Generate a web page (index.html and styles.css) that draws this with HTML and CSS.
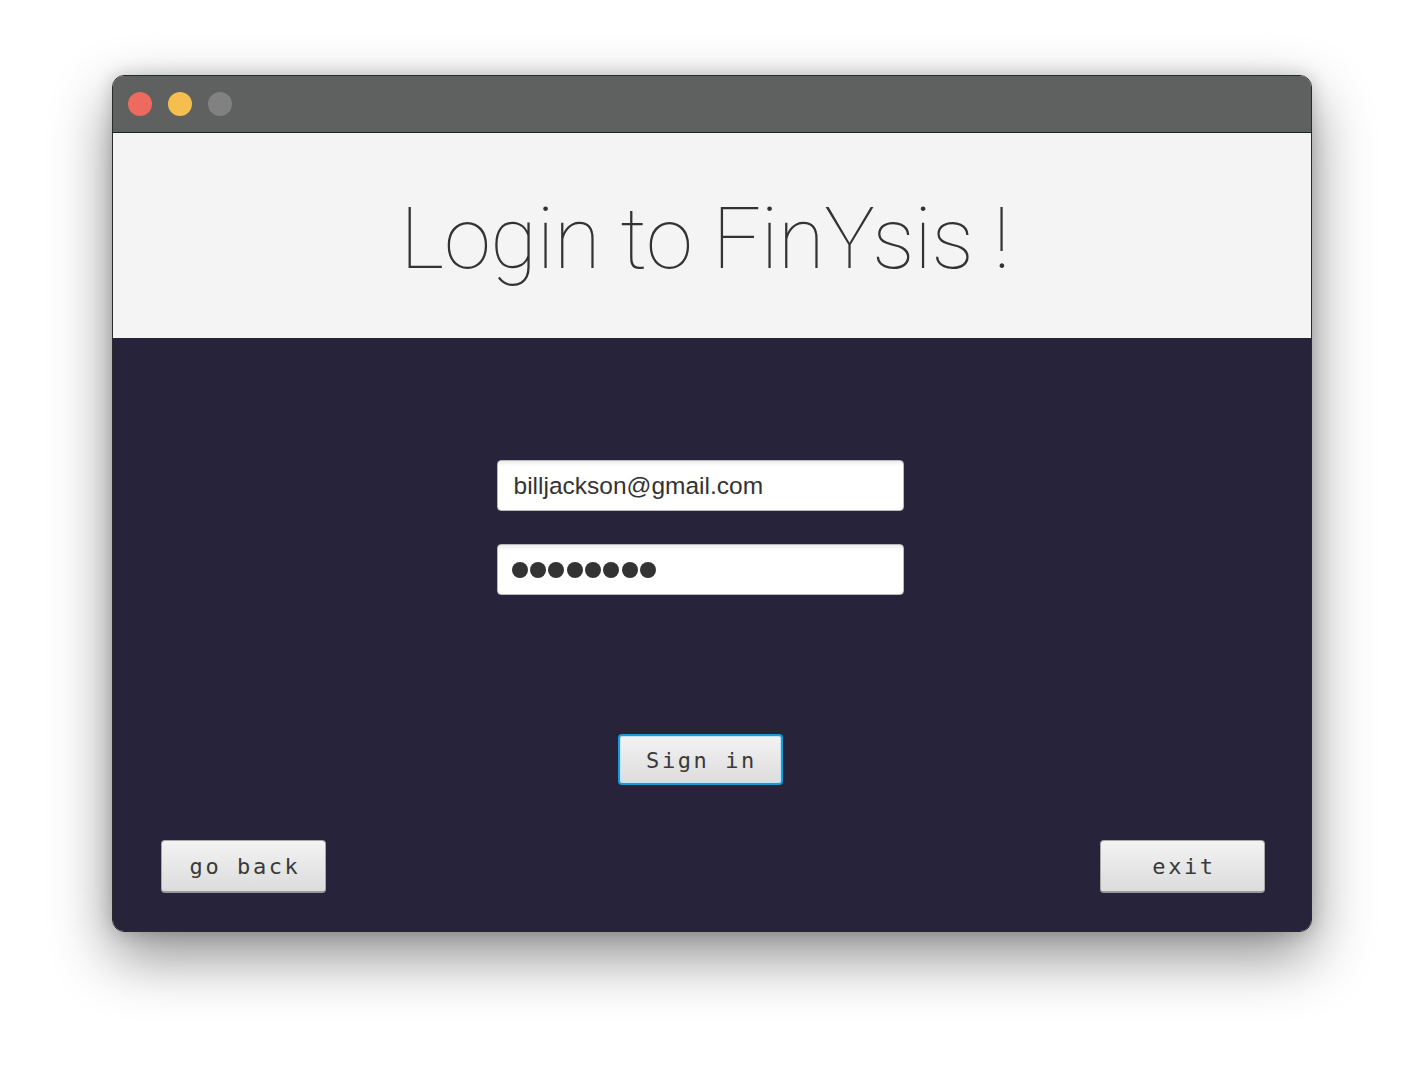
FILE: index.html
```html
<!DOCTYPE html>
<html>
<head>
<meta charset="utf-8">
<link rel="stylesheet" href="styles.css">
</head>
<body>
<div class="window">
  <div class="titlebar">
    <span class="light red"></span>
    <span class="light yellow"></span>
    <span class="light gray"></span>
  </div>
  <div class="header">
    <h1 class="title">Login to FinYsis !</h1>
  </div>
  <div class="main">
    <div class="fields">
      <div class="field">billjackson@gmail.com</div>
      <div class="field dots">
        <span class="dot"></span><span class="dot"></span><span class="dot"></span><span class="dot"></span><span class="dot"></span><span class="dot"></span><span class="dot"></span><span class="dot"></span>
      </div>
    </div>
    <div class="sign-row">
      <button class="btn focused">Sign in</button>
    </div>
    <div class="bottom-row">
      <button class="btn">go back</button>
      <button class="btn">exit</button>
    </div>
  </div>
</div>
</body>
</html>
```
FILE: styles.css
```css
html, body {
  margin: 0;
  padding: 0;
  background: #ffffff;
}
body {
  width: 1424px;
  height: 1080px;
  padding-top: 75px;
  padding-left: 112px;
  box-sizing: border-box;
}
.window {
  width: 1200px;
  height: 857px;
  box-sizing: border-box;
  border: 1px solid #2a2a2a;
  border-radius: 12px;
  overflow: hidden;
  display: flex;
  flex-direction: column;
  box-shadow: 0 24px 60px rgba(0,0,0,0.45), 0 0 18px rgba(0,0,0,0.18);
}
.titlebar {
  height: 57px;
  flex: none;
  background: #5f6160;
  border-bottom: 1px solid #202020;
  display: flex;
  align-items: center;
  padding-left: 15px;
  gap: 16px;
  box-sizing: border-box;
}
.light {
  width: 24px;
  height: 24px;
  border-radius: 50%;
  display: block;
}
.red { background: #ec6a5e; }
.yellow { background: #f4bf4f; }
.gray { background: #808180; }
.header {
  height: 205px;
  flex: none;
  background: #f4f4f4;
  display: flex;
  align-items: center;
  justify-content: center;
}
.title {
  margin: 0;
  padding-right: 14px;
  padding-top: 7px;
  font-family: Roboto, "Noto Sans", sans-serif;
  font-weight: 100;
  font-size: 85px;
  color: #333333;
  letter-spacing: -0.3px;
}
.main {
  flex: 1;
  background: #27233b;
  display: flex;
  flex-direction: column;
  padding: 122px 46px 38px 48px;
}
.fields {
  display: flex;
  flex-direction: column;
  align-items: center;
  gap: 33px;
  padding-right: 26px;
}
.field {
  width: 407px;
  height: 51px;
  box-sizing: border-box;
  background: linear-gradient(#ececec 0px, #ffffff 5px, #ffffff 100%);
  border: 1px solid #b9b9b9;
  border-radius: 4px;
  font-family: "Liberation Sans", Arial, sans-serif;
  font-size: 24.5px;
  color: #333333;
  display: flex;
  align-items: center;
  padding-left: 16px;
  padding-top: 1px;
}
.dots {
  gap: 2.4px;
  padding-left: 14px;
}
.dot {
  width: 16px;
  height: 16px;
  border-radius: 50%;
  background: #333333;
  display: block;
}
.sign-row {
  display: flex;
  justify-content: center;
  margin-top: 139px;
  padding-right: 26px;
}
.bottom-row {
  display: flex;
  justify-content: space-between;
  margin-top: auto;
}
.btn {
  width: 165px;
  height: 53px;
  box-sizing: border-box;
  border: 1px solid #a8a8a8;
  border-bottom: 2px solid #9a9a9a;
  border-radius: 4px;
  background: linear-gradient(#f3f3f3, #dcdcdc);
  font-family: "DejaVu Sans Mono", monospace;
  font-size: 22px;
  letter-spacing: 2.6px;
  color: #3a3a3a;
  padding: 0 0 0 3px;
  margin: 0;
}
.btn.focused {
  height: 51px;
  border: 2px solid #1b9ad6;
  box-shadow: inset 0 0 0 1px #bfe3f5;
  padding-top: 2px;
}
```
